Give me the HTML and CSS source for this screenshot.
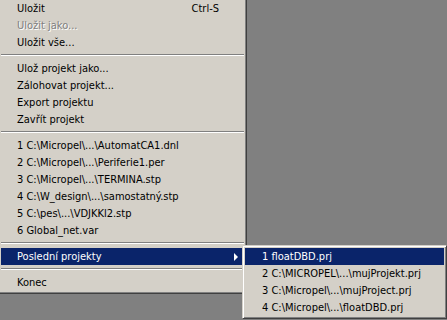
FILE: index.html
```html
<!DOCTYPE html>
<html lang="cs">
<head>
    <meta charset="UTF-8">
    <title>Soubor</title>
    <link rel="stylesheet" href="styles.css">
</head>
<body>
    <div class="menu main-menu">
        <div class="menu-item">
            <span class="label">Uložit</span>
            <span class="shortcut">Ctrl-S</span>
        </div>
        <div class="menu-item disabled"><span class="label">Uložit jako...</span></div>
        <div class="menu-item"><span class="label">Uložit vše...</span></div>
        <div class="separator"></div>
        <div class="menu-item"><span class="label">Ulož projekt jako...</span></div>
        <div class="menu-item"><span class="label">Zálohovat projekt...</span></div>
        <div class="menu-item"><span class="label">Export projektu</span></div>
        <div class="menu-item"><span class="label">Zavřít projekt</span></div>
        <div class="separator"></div>
        <div class="menu-item"><span class="label">1 C:\Micropel\...\AutomatCA1.dnl</span></div>
        <div class="menu-item"><span class="label">2 C:\Micropel\...\Periferie1.per</span></div>
        <div class="menu-item"><span class="label">3 C:\Micropel\...\TERMINA.stp</span></div>
        <div class="menu-item"><span class="label">4 C:\W_design\...\samostatný.stp</span></div>
        <div class="menu-item"><span class="label">5 C:\pes\...\VDJKKl2.stp</span></div>
        <div class="menu-item"><span class="label">6 Global_net.var</span></div>
        <div class="separator"></div>
        <div class="menu-item selected has-sub">
            <span class="label">Poslední projekty</span>
            <span class="arrow"></span>
            <div class="menu sub-menu">
                <div class="menu-item selected"><span class="label">1 floatDBD.prj</span></div>
                <div class="menu-item"><span class="label">2 C:\MICROPEL\...\mujProjekt.prj</span></div>
                <div class="menu-item"><span class="label">3 C:\Micropel\...\mujProject.prj</span></div>
                <div class="menu-item"><span class="label">4 C:\Micropel\...\floatDBD.prj</span></div>
            </div>
        </div>
        <div class="separator"></div>
        <div class="menu-item"><span class="label">Konec</span></div>
    </div>
</body>
</html>
```

FILE: styles.css
```css
html {
    background: #808080;
}
body {
    margin: 0;
    min-height: 320px;
    font-family: "DejaVu Sans Condensed", "DejaVu Sans", sans-serif;
    font-size: 11px;
    color: #000;
}
.menu {
    background: #d4d0c8;
    border: 1px solid;
    border-color: #d4d0c8 #404040 #404040 #d4d0c8;
    box-shadow: inset 1px 1px #fff, inset -1px -1px #808080;
    padding: 2px;
    box-sizing: border-box;
}
.main-menu {
    width: 249px;
    margin-left: -2px;
    margin-top: -3px;
}
.menu-item {
    display: flex;
    align-items: center;
    justify-content: space-between;
    height: 17px;
    padding: 0 25px 0 16px;
    white-space: nowrap;
}
.menu-item.disabled {
    color: #808080;
    text-shadow: 1px 1px 0 #fff;
}
.menu-item.selected {
    background: #0a246a;
    color: #fff;
}
.has-sub {
    position: relative;
}
.arrow {
    position: absolute;
    right: 6px;
    top: 5px;
    width: 0;
    height: 0;
    border-top: 4px solid transparent;
    border-bottom: 4px solid transparent;
    border-left: 4px solid #fff;
}
.separator {
    height: 9px;
    box-sizing: border-box;
    padding-top: 3px;
}
.separator::before {
    content: '';
    display: block;
    height: 1px;
    background: #808080;
    border-bottom: 1px solid #fff;
}
.sub-menu {
    position: absolute;
    left: 241px;
    top: -3px;
    width: 205px;
    color: #000;
}
.sub-menu .menu-item {
    padding-left: 17px;
}
.sub-menu .menu-item.selected {
    color: #fff;
}
```
